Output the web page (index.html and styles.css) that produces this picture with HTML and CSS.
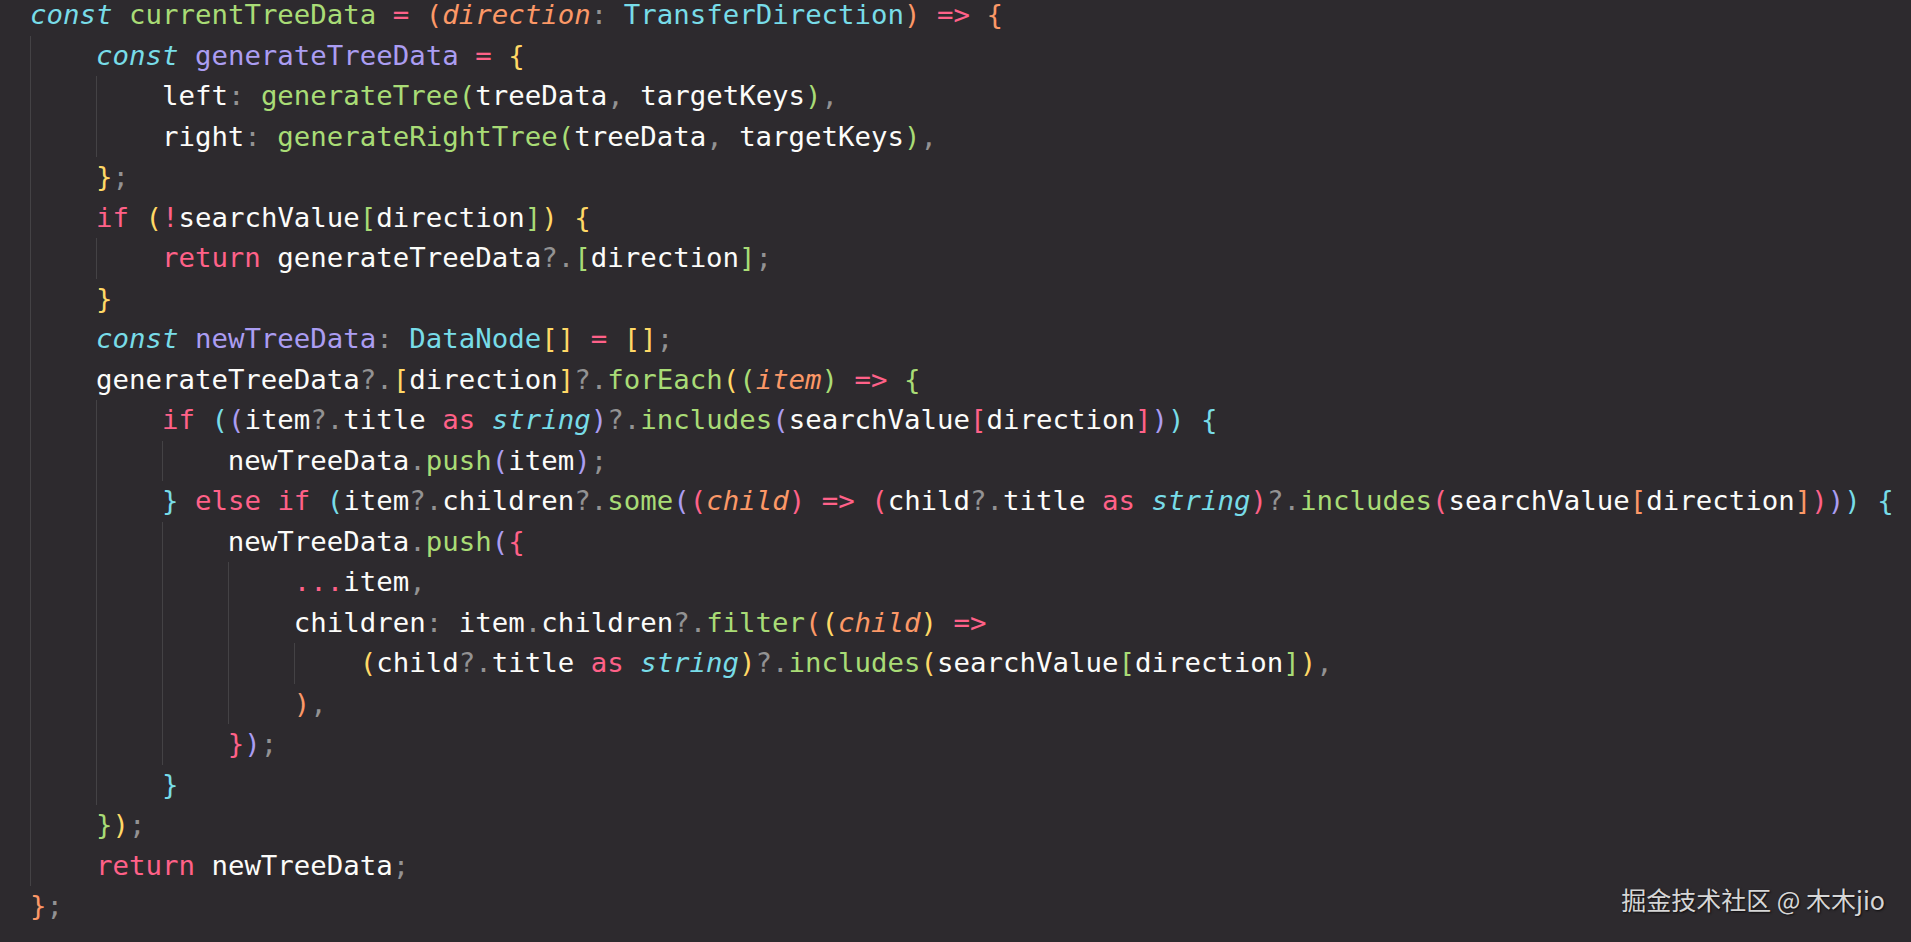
FILE: index.html
```html
<!DOCTYPE html>
<html lang="en">
<head>
<meta charset="utf-8">
<title>currentTreeData</title>
<link rel="stylesheet" href="styles.css">
</head>
<body>
<main class="editor">
  <div class="code">
    <div class="line"><span class="txt"><span class="s">const</span> <span class="f">currentTreeData</span> <span class="k">=</span> <span class="b1">(</span><span class="p">direction</span><span class="g">:</span> <span class="t">TransferDirection</span><span class="b1">)</span> <span class="k">=&gt;</span> <span class="b1">{</span></span></div>
    <div class="line"><span class="ind"></span><span class="txt"><span class="s">const</span> <span class="v">generateTreeData</span> <span class="k">=</span> <span class="b2">{</span></span></div>
    <div class="line"><span class="ind"></span><span class="ind"></span><span class="txt">left<span class="g">:</span> <span class="f">generateTree</span><span class="b3">(</span>treeData<span class="g">,</span> targetKeys<span class="b3">)</span><span class="g">,</span></span></div>
    <div class="line"><span class="ind"></span><span class="ind"></span><span class="txt">right<span class="g">:</span> <span class="f">generateRightTree</span><span class="b3">(</span>treeData<span class="g">,</span> targetKeys<span class="b3">)</span><span class="g">,</span></span></div>
    <div class="line"><span class="ind"></span><span class="txt"><span class="b2">}</span><span class="g">;</span></span></div>
    <div class="line"><span class="ind"></span><span class="txt"><span class="k">if</span> <span class="b2">(</span><span class="k">!</span>searchValue<span class="b3">[</span>direction<span class="b3">]</span><span class="b2">)</span> <span class="b2">{</span></span></div>
    <div class="line"><span class="ind"></span><span class="ind"></span><span class="txt"><span class="k">return</span> generateTreeData<span class="g">?.</span><span class="b3">[</span>direction<span class="b3">]</span><span class="g">;</span></span></div>
    <div class="line"><span class="ind"></span><span class="txt"><span class="b2">}</span></span></div>
    <div class="line"><span class="ind"></span><span class="txt"><span class="s">const</span> <span class="v">newTreeData</span><span class="g">:</span> <span class="t">DataNode</span><span class="b2">[]</span> <span class="k">=</span> <span class="b2">[]</span><span class="g">;</span></span></div>
    <div class="line"><span class="ind"></span><span class="txt">generateTreeData<span class="g">?.</span><span class="b2">[</span>direction<span class="b2">]</span><span class="g">?.</span><span class="f">forEach</span><span class="b2">(</span><span class="b3">(</span><span class="p">item</span><span class="b3">)</span> <span class="k">=&gt;</span> <span class="b3">{</span></span></div>
    <div class="line"><span class="ind"></span><span class="ind"></span><span class="txt"><span class="k">if</span> <span class="b4">(</span><span class="b5">(</span>item<span class="g">?.</span>title <span class="k">as</span> <span class="s">string</span><span class="b5">)</span><span class="g">?.</span><span class="f">includes</span><span class="b5">(</span>searchValue<span class="b6">[</span>direction<span class="b6">]</span><span class="b5">)</span><span class="b4">)</span> <span class="b4">{</span></span></div>
    <div class="line"><span class="ind"></span><span class="ind"></span><span class="ind"></span><span class="txt">newTreeData<span class="g">.</span><span class="f">push</span><span class="b5">(</span>item<span class="b5">)</span><span class="g">;</span></span></div>
    <div class="line"><span class="ind"></span><span class="ind"></span><span class="txt"><span class="b4">}</span> <span class="k">else</span> <span class="k">if</span> <span class="b4">(</span>item<span class="g">?.</span>children<span class="g">?.</span><span class="f">some</span><span class="b5">(</span><span class="b6">(</span><span class="p">child</span><span class="b6">)</span> <span class="k">=&gt;</span> <span class="b6">(</span>child<span class="g">?.</span>title <span class="k">as</span> <span class="s">string</span><span class="b6">)</span><span class="g">?.</span><span class="f">includes</span><span class="b6">(</span>searchValue<span class="b1">[</span>direction<span class="b1">]</span><span class="b6">)</span><span class="b5">)</span><span class="b4">)</span> <span class="b4">{</span></span></div>
    <div class="line"><span class="ind"></span><span class="ind"></span><span class="ind"></span><span class="txt">newTreeData<span class="g">.</span><span class="f">push</span><span class="b5">(</span><span class="b6">{</span></span></div>
    <div class="line"><span class="ind"></span><span class="ind"></span><span class="ind"></span><span class="ind"></span><span class="txt"><span class="k">...</span>item<span class="g">,</span></span></div>
    <div class="line"><span class="ind"></span><span class="ind"></span><span class="ind"></span><span class="ind"></span><span class="txt">children<span class="g">:</span> item<span class="g">.</span>children<span class="g">?.</span><span class="f">filter</span><span class="b1">(</span><span class="b2">(</span><span class="p">child</span><span class="b2">)</span> <span class="k">=&gt;</span></span></div>
    <div class="line"><span class="ind"></span><span class="ind"></span><span class="ind"></span><span class="ind"></span><span class="ind"></span><span class="txt"><span class="b2">(</span>child<span class="g">?.</span>title <span class="k">as</span> <span class="s">string</span><span class="b2">)</span><span class="g">?.</span><span class="f">includes</span><span class="b2">(</span>searchValue<span class="b3">[</span>direction<span class="b3">]</span><span class="b2">)</span><span class="g">,</span></span></div>
    <div class="line"><span class="ind"></span><span class="ind"></span><span class="ind"></span><span class="ind"></span><span class="txt"><span class="b1">)</span><span class="g">,</span></span></div>
    <div class="line"><span class="ind"></span><span class="ind"></span><span class="ind"></span><span class="txt"><span class="b6">}</span><span class="b5">)</span><span class="g">;</span></span></div>
    <div class="line"><span class="ind"></span><span class="ind"></span><span class="txt"><span class="b4">}</span></span></div>
    <div class="line"><span class="ind"></span><span class="txt"><span class="b3">}</span><span class="b2">)</span><span class="g">;</span></span></div>
    <div class="line"><span class="ind"></span><span class="txt"><span class="k">return</span> newTreeData<span class="g">;</span></span></div>
    <div class="line"><span class="txt"><span class="b1">}</span><span class="g">;</span></span></div>
  </div>
  <div class="watermark">掘金技术社区 @ 木木jio</div>
</main>
</body>
</html>
```

FILE: styles.css
```css
html, body {
  margin: 0;
  padding: 0;
  background: #2d2a2e;
}

.editor {
  position: relative;
  width: 1911px;
  height: 942px;
  overflow: hidden;
  background: #2d2a2e;
}

.code {
  margin-top: -5px;
  padding-left: 30px;
  font-family: "DejaVu Sans Mono", "Liberation Mono", monospace;
  font-size: 27.4px;
  line-height: 40.5px;
  color: #fcfcfa;
}

.line {
  display: flex;
  height: 40.5px;
  white-space: pre;
}

.ind {
  flex: none;
  width: 4ch;
  box-sizing: border-box;
  border-left: 1px solid #444245;
}

.txt {
  white-space: pre;
}

.s { color: #78dce8; font-style: italic; }
.k { color: #ff6188; }
.f { color: #a9dc76; }
.p { color: #fc9867; font-style: italic; }
.t { color: #78dce8; }
.v { color: #ab9df2; }
.g { color: #939293; }

.b1 { color: #fc9867; }
.b2 { color: #ffd866; }
.b3 { color: #a9dc76; }
.b4 { color: #78dce8; }
.b5 { color: #ab9df2; }
.b6 { color: #ff6188; }

.watermark {
  position: absolute;
  right: 26px;
  bottom: 27px;
  font-family: "Noto Sans CJK SC", "Noto Sans", sans-serif;
  font-size: 25px;
  line-height: 32px;
  color: #d6d6d6;
  text-shadow: 1px 1px 2px rgba(0, 0, 0, 0.7);
}
```
